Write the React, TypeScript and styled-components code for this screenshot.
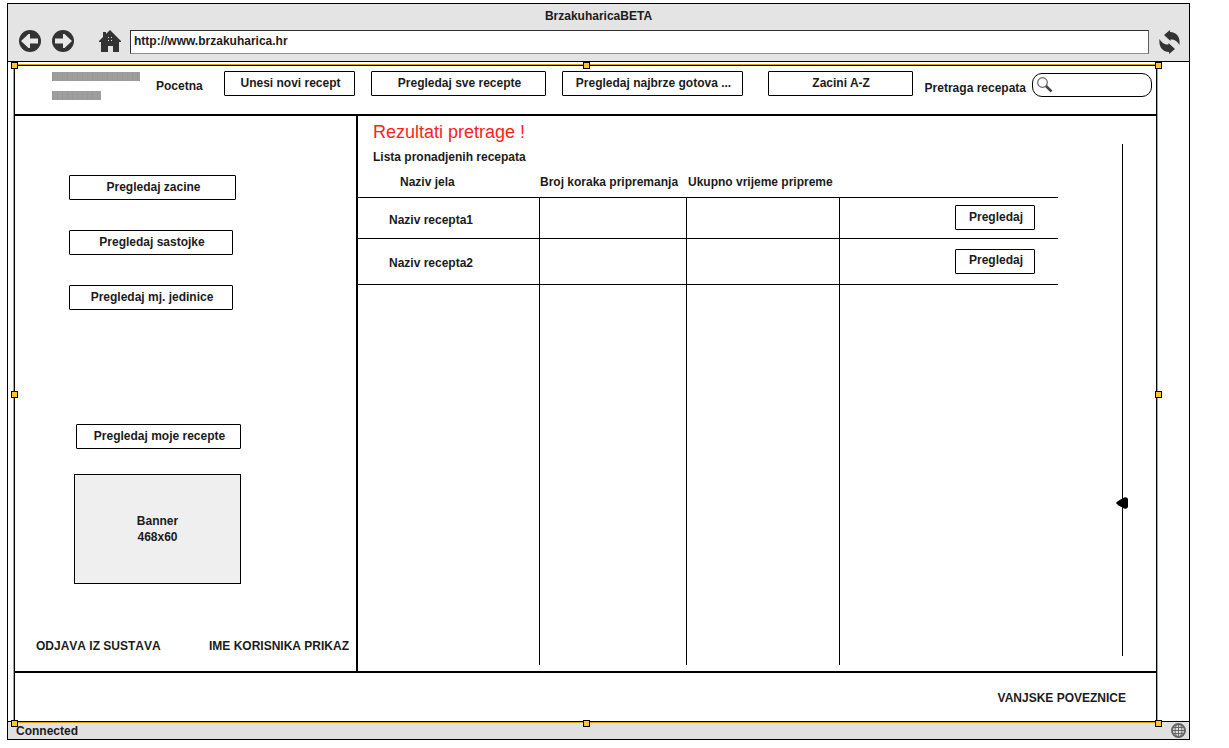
import React from 'react';
import styled, { createGlobalStyle } from 'styled-components';

const Global = createGlobalStyle`
  *, *::before, *::after { box-sizing: border-box; }
  body {
    margin: 0;
    background: #fff;
    color: #1c1c1c;
    font: bold 12px/16px "Liberation Sans", Arial, sans-serif;
  }
  button, input { font: inherit; color: inherit; }
  a { color: inherit; text-decoration: none; }
  svg { display: block; }
`;

const BrowserWindow = styled.div`
  display: flex;
  flex-direction: column;
  min-height: calc(100vh - 11px);
  margin: 3px 39px 8px 7px;
  border: 1px solid #000;
`;

const Chrome = styled.header`
  display: flex;
  flex-direction: column;
  gap: 6px;
  padding: 4px 7px 7px 11px;
  background: #e4e4e4;
  border-bottom: 1px solid #000;
`;

const WindowTitle = styled.div`
  padding-right: 4px;
  text-align: center;
`;

const Toolbar = styled.div`
  display: flex;
  align-items: flex-start;
  height: 24px;
`;

const IconButton = styled.button<{ $gap: number }>`
  display: block;
  flex: none;
  margin: 0 ${(p) => p.$gap}px 0 0;
  padding: 0;
  border: 0;
  background: none;
`;

const AddressBar = styled.input`
  flex: 1;
  min-width: 0;
  height: 24px;
  margin-right: 10px;
  padding: 0 3px 2px;
  border: 1px solid #303030;
  border-bottom-color: #909090;
  border-right-color: #606060;
  border-radius: 0;
  background: #fff;
`;

const Viewport = styled.div`
  display: flex;
  flex: 1;
  padding: 2px 31px 0 5px;
`;

const Selection = styled.div`
  position: relative;
  display: flex;
  flex: 1;
  flex-direction: column;
  margin-bottom: -2px;
  border: 1px solid #dca30a;
`;

const HandleLayer = styled.div`
  position: absolute;
  inset: 0 -1px -1px 0;
  pointer-events: none;
`;

const Handle = styled.span<{ $x: number; $y: number }>`
  position: absolute;
  left: ${(p) => p.$x}%;
  top: ${(p) => p.$y}%;
  width: 7px;
  height: 7px;
  margin: -3px;
  border: 1px solid #000;
  background: #ffc62b;
`;

const Page = styled.div`
  display: flex;
  flex: 1;
  flex-direction: column;
  border: 1px solid #000;
`;

const SiteHeader = styled.div`
  display: flex;
  align-items: flex-start;
  height: 50px;
  padding: 5px 4px 0 37px;
  border-bottom: 2px solid #000;
`;

const Logo = styled.div`
  display: flex;
  flex: none;
  flex-direction: column;
  gap: 10px;
  width: 88px;
  margin-right: 16px;
  padding-top: 1px;
`;

const LogoBar = styled.span<{ $width: number }>`
  width: ${(p) => p.$width}px;
  height: 9px;
  background: repeating-linear-gradient(90deg, #989898 0 1px, #9e9e9e 1px 5px);
`;

const Nav = styled.nav`
  display: flex;
  flex: 1;
  align-items: flex-start;
  gap: 16px;
`;

const HomeLink = styled.a`
  width: 52px;
  padding-top: 7px;
`;

const BoxButton = styled.button<{ $width: number }>`
  width: ${(p) => p.$width}px;
  height: 25px;
  padding: 0 0 2px 2px;
  border: 1px solid #000;
  border-radius: 1px;
  background: #fff;
  white-space: nowrap;
`;

const NavButton = styled(BoxButton)`
  &:last-child { margin-left: auto; }
`;

const Search = styled.form`
  display: flex;
  gap: 6px;
  margin-left: 12px;
  padding-top: 2px;
`;

const SearchLabel = styled.label`
  padding-top: 7px;
`;

const SearchField = styled.div`
  display: flex;
  align-items: center;
  width: 120px;
  height: 24px;
  padding: 0 8px 0 4px;
  border: 1px solid #000;
  border-radius: 10px;
`;

const SearchInput = styled.input`
  flex: 1;
  min-width: 0;
  padding: 0 4px;
  border: 0;
  background: none;
  outline: 0;
`;

const Body = styled.div`
  display: flex;
  flex: 1;
`;

const Sidebar = styled.aside`
  display: flex;
  flex: none;
  flex-direction: column;
  align-items: flex-start;
  width: 343px;
  padding: 59px 7px 17px 54px;
  border-right: 2px solid #000;
`;

const SideMenu = styled.div`
  display: flex;
  flex-direction: column;
  gap: 30px;
  margin-bottom: 114px;
`;

const MyRecipes = styled.div`
  padding-left: 7px;
`;

const Banner = styled.div`
  display: flex;
  align-items: center;
  justify-content: center;
  width: 167px;
  height: 110px;
  margin: 25px 0 0 5px;
  border: 1px solid #000;
  background: #efefef;
  text-align: center;
`;

const Account = styled.div`
  display: flex;
  align-self: stretch;
  justify-content: space-between;
  margin: auto 0 0 -33px;
  font-kerning: none;
`;

const Results = styled.main`
  display: flex;
  flex: 1;
  flex-direction: column;
  min-width: 0;
`;

const Title = styled.h1`
  margin: 0;
  padding: 5px 0 0 15px;
  color: #f22;
  font-size: 18px;
  font-weight: normal;
  line-height: 22px;
`;

const Subtitle = styled.h2`
  margin: 0;
  padding: 6px 0 0 15px;
  font-size: 12px;
  line-height: 16px;
`;

const ResultsTable = styled.table`
  flex: 1;
  width: 100%;
  height: 100%;
  border-collapse: collapse;
  table-layout: fixed;
`;

const TableArea = styled.div`
  display: flex;
  flex: 1;
  margin-right: 98px;
  padding-bottom: 6px;
`;

const Col = styled.col<{ $width?: number }>`
  width: ${(p) => (p.$width ? `${p.$width}px` : 'auto')};
`;

const HeadCell = styled.th<{ $inset: number }>`
  height: 32px;
  padding: 3px 0 0 ${(p) => p.$inset}px;
  border-bottom: 1px solid #000;
  text-align: left;
  white-space: nowrap;
`;

const Row = styled.tr<{ $height: number }>`
  height: ${(p) => p.$height}px;
  border-bottom: 1px solid #000;
`;

const Cell = styled.td`
  padding: 4px 0 0 31px;
  border-right: 1px solid #000;
  text-align: left;

  &:last-child {
    padding: 0 23px 0 0;
    border-right: 0;
    text-align: right;
  }
`;

const FillRow = styled.tr``;

const ScrollArea = styled.div`
  display: flex;
  flex: 1;
  position: relative;
`;

const ScrollTrack = styled.div`
  position: absolute;
  top: 28px;
  right: 33px;
  bottom: 15px;
  width: 1px;
  background: #000;
`;

const ScrollThumb = styled.svg`
  position: absolute;
  top: 69%;
  left: -6px;
`;

const SiteFooter = styled.footer`
  display: flex;
  justify-content: flex-end;
  height: 50px;
  padding: 17px 30px 0 0;
  border-top: 2px solid #000;
`;

const StatusBar = styled.footer`
  display: flex;
  align-items: center;
  justify-content: space-between;
  height: 18px;
  padding: 0 3px 0 8px;
  border-top: 1px solid #000;
  background: #e1e1e1;
`;

const ArrowIcon = ({ flip = false }: { flip?: boolean }) => (
  <svg width="22" height="22" viewBox="0 0 22 22" aria-hidden="true">
    <circle cx="11" cy="11" r="11" fill="#333" />
    <path
      d="M2 11 9.500 4H11V8.500H19V13.500H11V18H9.500Z"
      fill="#e8e8e8"
      transform={flip ? 'rotate(180 11 11)' : undefined}
    />
  </svg>
);

const HomeIcon = () => (
  <svg width="22" height="22" viewBox="0 0 22 22" aria-hidden="true">
    <path d="M11 0 15 4 22 11V12H20V22H14V16H9V22H2V12H0V11L4 7V2H7V4Z" fill="#333" />
    <path d="M9 7h1v1H9zM12 7h1v1h-1zM9 10h1v1H9zM12 10h1v1h-1z" fill="#e4e4e4" />
  </svg>
);

const RefreshIcon = () => (
  <svg width="22" height="24" viewBox="0 0 22 24" aria-hidden="true">
    <g fill="#333">
      <path d="M5 5 11 0V2C17.500 2 21.500 7 20.500 15C18.500 11.500 16 9.500 11.500 9.500V11Z" />
      <path
        d="M5 5 11 0V2C17.500 2 21.500 7 20.500 15C18.500 11.500 16 9.500 11.500 9.500V11Z"
        transform="rotate(180 10.500 12)"
      />
    </g>
  </svg>
);

const SearchIcon = () => (
  <svg width="16" height="16" viewBox="0 0 16 16" fill="none" aria-hidden="true">
    <circle cx="5.500" cy="5.500" r="4.800" stroke="#666" strokeWidth="1.200" />
    <path d="M9 9 14.500 14.500" stroke="#444" strokeWidth="2.500" />
  </svg>
);

const GlobeIcon = () => (
  <svg width="15" height="15" viewBox="0 0 15 15" fill="none" aria-hidden="true">
    <circle cx="7.500" cy="7.500" r="6.500" stroke="#666" strokeWidth="2" />
    <path d="M7.500 1V14M1 7.500H14M2 4.500H13M2 10.500H13" stroke="#666" />
    <ellipse cx="7.500" cy="7.500" rx="3.500" ry="6.500" stroke="#666" />
  </svg>
);

const handles = [
  [0, 0], [50, 0], [100, 0],
  [0, 50], [100, 50],
  [0, 100], [50, 100], [100, 100],
];

const navItems = [
  { label: 'Unesi novi recept', width: 131 },
  { label: 'Pregledaj sve recepte', width: 175 },
  { label: 'Pregledaj najbrze gotova ...', width: 181 },
  { label: 'Zacini A-Z', width: 145 },
];

const sideItems = [
  { label: 'Pregledaj zacine', width: 167 },
  { label: 'Pregledaj sastojke', width: 164 },
  { label: 'Pregledaj mj. jedinice', width: 164 },
];

const recipes = [
  { name: 'Naziv recepta1', height: 41 },
  { name: 'Naziv recepta2', height: 46 },
];

export default function App() {
  return (
    <>
      <Global />
      <BrowserWindow>
        <Chrome>
          <WindowTitle>BrzakuharicaBETA</WindowTitle>
          <Toolbar>
            <IconButton $gap={11} aria-label="Natrag"><ArrowIcon /></IconButton>
            <IconButton $gap={25} aria-label="Naprijed"><ArrowIcon flip /></IconButton>
            <IconButton $gap={9} aria-label="Pocetna stranica"><HomeIcon /></IconButton>
            <AddressBar aria-label="Adresa" defaultValue="http://www.brzakuharica.hr" />
            <IconButton $gap={1} aria-label="Osvjezi"><RefreshIcon /></IconButton>
          </Toolbar>
        </Chrome>

        <Viewport>
          <Selection>
            <Page>
              <SiteHeader>
                <Logo>
                  <LogoBar $width={88} />
                  <LogoBar $width={49} />
                </Logo>
                <Nav>
                  <HomeLink href="#pocetna">Pocetna</HomeLink>
                  {navItems.map((item) => (
                    <NavButton key={item.label} $width={item.width}>{item.label}</NavButton>
                  ))}
                </Nav>
                <Search>
                  <SearchLabel htmlFor="search">Pretraga recepata</SearchLabel>
                  <SearchField>
                    <SearchIcon />
                    <SearchInput id="search" type="text" />
                  </SearchField>
                </Search>
              </SiteHeader>

              <Body>
                <Sidebar>
                  <SideMenu>
                    {sideItems.map((item) => (
                      <BoxButton key={item.label} $width={item.width}>{item.label}</BoxButton>
                    ))}
                  </SideMenu>
                  <MyRecipes>
                    <BoxButton $width={165}>Pregledaj moje recepte</BoxButton>
                  </MyRecipes>
                  <Banner>Banner<br />468x60</Banner>
                  <Account>
                    <a href="#odjava">ODJAVA IZ SUSTAVA</a>
                    <span>IME KORISNIKA PRIKAZ</span>
                  </Account>
                </Sidebar>

                <ScrollArea>
                  <Results>
                    <Title>Rezultati pretrage !</Title>
                    <Subtitle>Lista pronadjenih recepata</Subtitle>
                    <TableArea>
                      <ResultsTable>
                        <colgroup>
                          <Col $width={181} />
                          <Col $width={147} />
                          <Col $width={153} />
                          <Col />
                        </colgroup>
                        <thead>
                          <tr>
                            <HeadCell $inset={42}>Naziv jela</HeadCell>
                            <HeadCell $inset={1}>Broj koraka pripremanja</HeadCell>
                            <HeadCell $inset={2}>Ukupno vrijeme pripreme</HeadCell>
                            <HeadCell $inset={0} />
                          </tr>
                        </thead>
                        <tbody>
                          {recipes.map((recipe) => (
                            <Row key={recipe.name} $height={recipe.height}>
                              <Cell>{recipe.name}</Cell>
                              <Cell />
                              <Cell />
                              <Cell><BoxButton $width={80}>Pregledaj</BoxButton></Cell>
                            </Row>
                          ))}
                          <FillRow>
                            <Cell />
                            <Cell />
                            <Cell />
                            <Cell />
                          </FillRow>
                        </tbody>
                      </ResultsTable>
                    </TableArea>
                  </Results>
                  <ScrollTrack>
                    <ScrollThumb width="12" height="12" viewBox="0 0 12 12" aria-hidden="true">
                      <path d="M0 6Q1 4 8 .5Q11 -.5 12 2V10Q11 12.500 8 11.500Q1 8 0 6Z" fill="#000" />
                    </ScrollThumb>
                  </ScrollTrack>
                </ScrollArea>
              </Body>

              <SiteFooter>
                <a href="#poveznice">VANJSKE POVEZNICE</a>
              </SiteFooter>
            </Page>
            <HandleLayer>
              {handles.map(([x, y]) => <Handle key={`${x}-${y}`} $x={x} $y={y} />)}
            </HandleLayer>
          </Selection>
        </Viewport>

        <StatusBar>
          <span>Connected</span>
          <GlobeIcon />
        </StatusBar>
      </BrowserWindow>
    </>
  );
}
